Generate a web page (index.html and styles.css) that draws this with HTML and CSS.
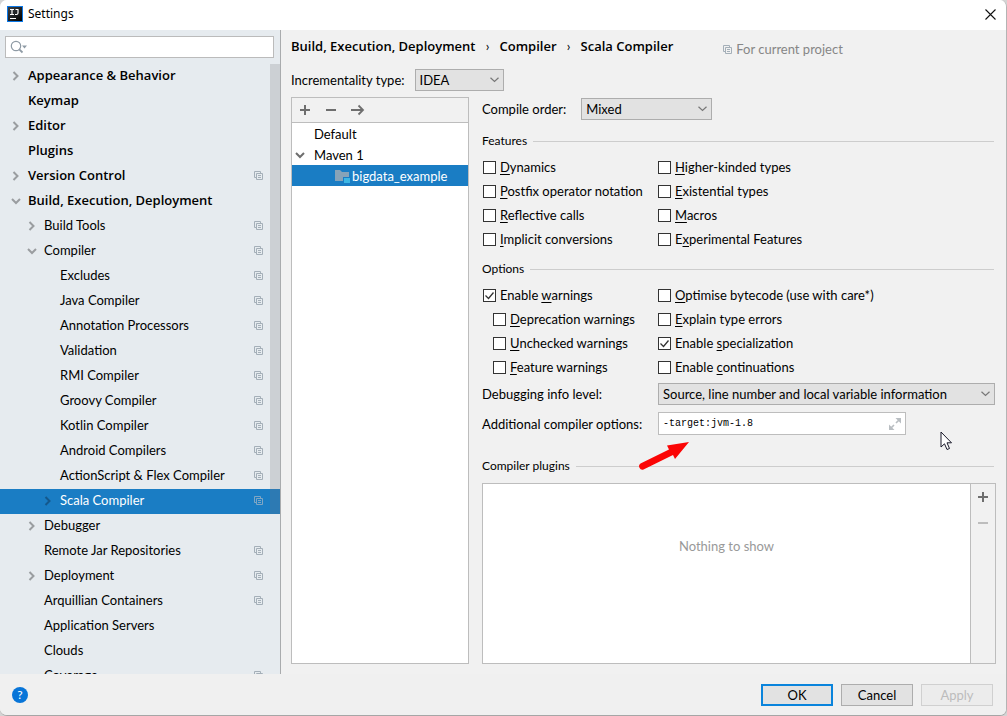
FILE: index.html
```html
<!DOCTYPE html>
<html lang="en">
<head>
<meta charset="utf-8">
<title>Settings</title>
<link rel="stylesheet" href="styles.css">
</head>
<body>
<svg class="defs" aria-hidden="true">
  <symbol id="right" viewBox="0 0 10 10"><path d="M2.5 1 L6.5 5 L2.5 9" fill="none" stroke="currentColor" stroke-width="2"/></symbol>
  <symbol id="down" viewBox="0 0 10 10"><path d="M1 3 L5 7 L9 3" fill="none" stroke="currentColor" stroke-width="2"/></symbol>
  <symbol id="copy" viewBox="0 0 9 9"><path d="M2.5 6.5 H.5 V.5 H6.5 V2.5 M2.5 2.5 H8.5 V8.5 H2.5 Z M4 4.5 H7 M4 6.5 H7" fill="none" stroke="currentColor"/></symbol>
  <symbol id="plus" viewBox="0 0 12 12"><path d="M1 6 H11 M6 1 V11" fill="none" stroke="currentColor" stroke-width="2"/></symbol>
  <symbol id="minus" viewBox="0 0 12 12"><path d="M1 6 H11" fill="none" stroke="currentColor" stroke-width="2"/></symbol>
</svg>
<div class="window">
  <header class="titlebar">
    <svg class="logo" viewBox="0 0 16 16"><defs><linearGradient id="lg" x1="0" y1="0" x2="1" y2="1"><stop offset="0" stop-color="#3c4248"/><stop offset="1" stop-color="#000"/></linearGradient></defs><rect width="16" height="16" fill="#0b78e8"/><rect x="1" y="1" width="14" height="14" fill="url(#lg)"/><path d="M3 3.5 H7 M5 3.5 V8.5 M3 8.5 H7 M8.5 3.5 H11.5 M11 3.5 V7 Q11 8.5 9.5 8.5 H8 M3 12.5 H9" fill="none" stroke="#fff" stroke-width="1.2"/></svg>
    <span class="title">Settings</span>
    <button class="close" aria-label="Close"><svg viewBox="0 0 11 11"><path d="M.5 .5 L10.5 10.5 M10.5 .5 L.5 10.5" stroke="#111" fill="none" stroke-width="1.1"/></svg></button>
  </header>
  <div class="main">
    <aside class="sidebar">
      <div class="search">
        <svg viewBox="0 0 18 14"><circle cx="6" cy="6" r="4.7" fill="none" stroke="#8f9ba5" stroke-width="1.2"/><path d="M9.3 9.3 L12.5 12.5" stroke="#8f9ba5" stroke-width="1.8"/><path d="M12 5.5 H17 L14.5 8.5 Z" fill="#8f9ba5"/></svg>
        <input type="text" aria-label="Search settings">
      </div>
      <nav class="treewrap">
        <ul class="tree">
          <li class="l1"><svg class="chev"><use href="#right"/></svg><span>Appearance &amp; Behavior</span></li>
          <li class="l1"><i class="chev"></i><span>Keymap</span></li>
          <li class="l1"><svg class="chev"><use href="#right"/></svg><span>Editor</span></li>
          <li class="l1"><i class="chev"></i><span>Plugins</span></li>
          <li class="l1"><svg class="chev"><use href="#right"/></svg><span>Version Control</span><svg class="copy"><use href="#copy"/></svg></li>
          <li class="l1"><svg class="chev"><use href="#down"/></svg><span>Build, Execution, Deployment</span></li>
          <li class="l2"><svg class="chev"><use href="#right"/></svg><span>Build Tools</span><svg class="copy"><use href="#copy"/></svg></li>
          <li class="l2"><svg class="chev"><use href="#down"/></svg><span>Compiler</span><svg class="copy"><use href="#copy"/></svg></li>
          <li class="l3"><i class="chev"></i><span>Excludes</span><svg class="copy"><use href="#copy"/></svg></li>
          <li class="l3"><i class="chev"></i><span>Java Compiler</span><svg class="copy"><use href="#copy"/></svg></li>
          <li class="l3"><i class="chev"></i><span>Annotation Processors</span><svg class="copy"><use href="#copy"/></svg></li>
          <li class="l3"><i class="chev"></i><span>Validation</span><svg class="copy"><use href="#copy"/></svg></li>
          <li class="l3"><i class="chev"></i><span>RMI Compiler</span><svg class="copy"><use href="#copy"/></svg></li>
          <li class="l3"><i class="chev"></i><span>Groovy Compiler</span><svg class="copy"><use href="#copy"/></svg></li>
          <li class="l3"><i class="chev"></i><span>Kotlin Compiler</span><svg class="copy"><use href="#copy"/></svg></li>
          <li class="l3"><i class="chev"></i><span>Android Compilers</span><svg class="copy"><use href="#copy"/></svg></li>
          <li class="l3"><i class="chev"></i><span>ActionScript &amp; Flex Compiler</span><svg class="copy"><use href="#copy"/></svg></li>
          <li class="l3 selected"><svg class="chev"><use href="#right"/></svg><span>Scala Compiler</span><svg class="copy"><use href="#copy"/></svg></li>
          <li class="l2"><svg class="chev"><use href="#right"/></svg><span>Debugger</span></li>
          <li class="l2"><i class="chev"></i><span>Remote Jar Repositories</span><svg class="copy"><use href="#copy"/></svg></li>
          <li class="l2"><svg class="chev"><use href="#right"/></svg><span>Deployment</span><svg class="copy"><use href="#copy"/></svg></li>
          <li class="l2"><i class="chev"></i><span>Arquillian Containers</span><svg class="copy"><use href="#copy"/></svg></li>
          <li class="l2"><i class="chev"></i><span>Application Servers</span></li>
          <li class="l2"><i class="chev"></i><span>Clouds</span></li>
          <li class="l2"><i class="chev"></i><span>Coverage</span><svg class="copy"><use href="#copy"/></svg></li>
        </ul>
        <div class="thumb"></div>
      </nav>
    </aside>
    <main class="content">
      <div class="crumbs">
        <b>Build, Execution, Deployment</b><span class="sep">›</span><b>Compiler</b><span class="sep">›</span><b>Scala Compiler</b>
        <span class="scope"><svg><use href="#copy"/></svg>For current project</span>
      </div>
      <div class="inc"><label for="inc">Incrementality type:</label><select id="inc" class="w-inc"><option>IDEA</option></select></div>
      <div class="panes">
        <section class="profiles">
          <div class="toolbar">
            <button aria-label="Add"><svg><use href="#plus"/></svg></button>
            <button aria-label="Remove"><svg><use href="#minus"/></svg></button>
            <button class="move" aria-label="Move"><svg viewBox="0 0 14 12"><path d="M0 6 H12 M7.5 1.5 L12 6 L7.5 10.5" fill="none" stroke="currentColor" stroke-width="1.8"/></svg></button>
          </div>
          <ul class="modules">
            <li><i class="chev"></i>Default</li>
            <li><svg class="chev"><use href="#down"/></svg>Maven 1</li>
            <li class="module selected"><svg class="folder" viewBox="0 0 15 14"><path d="M0 1 H5 L7 3 H14 V8 H8 V12 H0 Z" fill="#87a3b8"/><rect x="9" y="9" width="6" height="5" fill="#3db7e4"/></svg>bigdata_example</li>
          </ul>
        </section>
        <form class="settings">
          <div class="order"><label for="order">Compile order:</label><select id="order" class="w-order"><option>Mixed</option></select></div>
          <h2 class="features">Features</h2>
          <div class="checks">
            <label><input type="checkbox"><span><u>D</u>ynamics</span></label>
            <label><input type="checkbox"><span><u>H</u>igher-kinded types</span></label>
            <label><input type="checkbox"><span><u>P</u>ostfix operator notation</span></label>
            <label><input type="checkbox"><span><u>E</u>xistential types</span></label>
            <label><input type="checkbox"><span><u>R</u>eflective calls</span></label>
            <label><input type="checkbox"><span><u>M</u>acros</span></label>
            <label><input type="checkbox"><span><u>I</u>mplicit conversions</span></label>
            <label><input type="checkbox"><span>E<u>x</u>perimental Features</span></label>
          </div>
          <h2 class="options">Options</h2>
          <div class="checks">
            <label><input type="checkbox" checked><span>Enable <u>w</u>arnings</span></label>
            <label><input type="checkbox"><span><u>O</u>ptimise bytecode (use with care*)</span></label>
            <label class="sub"><input type="checkbox"><span><u>D</u>eprecation warnings</span></label>
            <label><input type="checkbox"><span><u>E</u>xplain type errors</span></label>
            <label class="sub"><input type="checkbox"><span><u>U</u>nchecked warnings</span></label>
            <label><input type="checkbox" checked><span>Enable <u>s</u>pecialization</span></label>
            <label class="sub"><input type="checkbox"><span><u>F</u>eature warnings</span></label>
            <label><input type="checkbox"><span>Enable <u>c</u>ontinuations</span></label>
          </div>
          <div class="fields">
            <label for="debug">Debugging info level:</label>
            <select id="debug"><option>Source, line number and local variable information</option></select>
            <label for="extra">Additional compiler options:</label>
            <div class="extra"><input id="extra" type="text" value="-target:jvm-1.8"><svg viewBox="0 0 12 12"><path d="M6.5 0 H12 V5.5 Z M0 6.5 V12 H5.5 Z" fill="#b9bec2"/><path d="M10 2 L7 5 M2 10 L5 7" stroke="#b9bec2" stroke-width="1.6"/></svg>
              <svg class="pointer-arrow" viewBox="0 0 54 30"><path d="M2.500 22.500 L31 8.500 L29 4.500 L51 1 L37 18 L35 14 L5.500 28.500 A3.400 3.400 0 0 1 2.500 22.500 Z" fill="#fb0505"/></svg>
              <svg class="cursor" viewBox="0 0 13 20"><path d="M1 1 V16 L4.500 12.800 L7 18.500 L9.500 17.500 L7 11.800 H11.500 Z" fill="#fff" stroke="#1a1a2a"/></svg>
            </div>
          </div>
          <h2 class="plugins">Compiler plugins</h2>
          <div class="plugin-list">
            <div class="empty">Nothing to show</div>
            <div class="side">
              <button type="button" aria-label="Add plugin"><svg><use href="#plus"/></svg></button>
              <button type="button" aria-label="Remove plugin" disabled><svg><use href="#minus"/></svg></button>
            </div>
          </div>
        </form>
      </div>
    </main>
  </div>
  <footer class="footer">
    <button class="help" aria-label="Help">?</button>
    <button class="btn primary">OK</button>
    <button class="btn">Cancel</button>
    <button class="btn" disabled>Apply</button>
  </footer>
</div>
</body>
</html>
```
FILE: styles.css
```css
* { box-sizing: border-box; }
body { margin: 0; background: #d4d4d4; color: #000; }
body, button, input, select { font: 13px/18px Lato, "Noto Sans", sans-serif; }
button { padding: 0; border: 0; background: none; color: #6e6e6e; }
ul { margin: 0; padding: 0; list-style: none; }
svg { display: block; flex: none; }
.defs { position: absolute; width: 0; height: 0; }

.window { display: flex; flex-direction: column; height: 100vh; overflow: hidden; background: #f1f1f1; border-right: 1px solid #b4b4b4; border-bottom: 1px solid #a6a6a6; border-radius: 7px; }
.titlebar { display: flex; align-items: center; height: 30px; flex: none; padding: 0 10px 2px 7px; background: #fff; }
.logo { width: 16px; height: 16px; }
.title { flex: 1; padding-left: 5px; font: 12px/18px "Noto Sans", sans-serif; }
.close svg { width: 11px; height: 11px; }
.main { display: flex; flex: 1; min-height: 0; }

.sidebar { display: flex; flex-direction: column; flex: none; width: 281px; padding-top: 6px; background: #e6ebef; border-right: 1px solid #a9abad; }
.search { display: flex; align-items: center; flex: none; height: 22px; margin: 0 6px 6px 5px; padding-left: 4px; background: #fff; border: 1px solid #bbb; }
.search svg { width: 18px; height: 14px; }
.search input { flex: 1; min-width: 0; border: 0; padding: 0 4px; outline: 0; }
.treewrap { position: relative; flex: 1; min-height: 0; overflow: hidden; }
.tree li { display: flex; align-items: center; height: 25px; padding-right: 17px; padding-bottom: 2px; white-space: nowrap; }
.tree span { flex: 1; padding-bottom: 1px; }
.chev { width: 10px; height: 10px; margin-right: 7px; flex: none; color: #9a9da0; }
.l1 { padding-left: 11px; }
.l1, .crumbs b { font-family: "Open Sans", "Noto Sans", sans-serif; font-weight: 600; }
.l2 { padding-left: 27px; }
.l3 { padding-left: 43px; }
.copy { width: 9px; height: 9px; color: #a4afb8; }
.selected { background: #1a7dc4; color: #fff; }
.tree .selected .chev { color: #14588c; }
.tree .selected .copy { color: #7fa6c4; }
.thumb { position: absolute; top: 0; right: 0; width: 10px; height: 450px; background: rgba(115, 115, 120, .22); }

.content { display: flex; flex-direction: column; flex: 1; min-width: 0; padding: 7px 10px 10px; }
.crumbs { display: flex; align-items: center; height: 18px; margin-bottom: 14px; white-space: nowrap; }
.sep { width: 24px; text-align: center; }
.scope { display: flex; align-items: center; gap: 4px; margin-left: 50px; padding-top: 6px; color: #868686; }
.scope svg { width: 9px; height: 9px; color: #a4afb8; }
.inc, .order { display: flex; align-items: center; gap: 10px; }
.order { gap: 15px; }
.inc { margin-bottom: 6px; }
select { appearance: none; height: 22px; padding: 0 20px 0 4px; border: 1px solid #adadad; border-radius: 0; color: #000; background: #e2e2e2 url("data:image/svg+xml,%3Csvg xmlns='http://www.w3.org/2000/svg' width='9' height='6'%3E%3Cpath d='M.5 .8 L4.5 4.5 L8.500 .8' fill='none' stroke='%23777' stroke-width='1.200'/%3E%3C/svg%3E") no-repeat right 4px center; }
.w-inc { width: 89px; }
.w-order { width: 131px; }
.panes { display: flex; flex: 1; gap: 13px; min-height: 0; }
.profiles { flex: none; width: 178px; background: #fff; border: 1px solid #bdbdbd; }
.toolbar { display: flex; align-items: center; gap: 14px; height: 25px; padding-left: 7px; background: #f1f1f1; border-bottom: 1px solid #bdbdbd; }
.toolbar svg, .side svg { width: 12px; height: 12px; }
.toolbar .move svg { width: 14px; }
.modules li { display: flex; align-items: center; height: 21px; padding-left: 3px; }
.modules .chev { margin-right: 9px; color: #6e6e6e; }
.modules .module { padding-left: 43px; }
.folder { width: 15px; height: 14px; margin-right: 2px; }

.settings { display: flex; flex-direction: column; flex: 1; min-width: 0; padding-top: 1px; }
h2 { display: flex; align-items: center; gap: 6px; margin: 0 2px 5px 0; font-size: 12px; line-height: 18px; font-weight: normal; }
h2::after { content: ""; flex: 1; height: 1px; background: #cdcdcd; }
.features { margin-top: 12px; }
.options { margin-top: 9px; }
.plugins { margin: 22px 2px 8px 0; }
.checks { display: grid; grid-template-columns: 175px 1fr; }
.checks label { display: flex; align-items: center; gap: 4px; height: 24px; padding-left: 1px; white-space: nowrap; }
.checks .sub { padding-left: 11px; }
input[type="checkbox"] { appearance: none; flex: none; width: 13px; height: 13px; margin: 0; background: #fff; border: 1px solid #333; }
input[type="checkbox"]:checked { background: #fff url("data:image/svg+xml,%3Csvg xmlns='http://www.w3.org/2000/svg' width='11' height='11'%3E%3Cpath d='M1.500 5.500 L4.500 8.500 L9.500 2.500' fill='none' stroke='%23333' stroke-width='1.300'/%3E%3C/svg%3E") no-repeat center; }
u { text-underline-offset: 2px; }
.fields { display: grid; grid-template-columns: 176px 1fr; margin: 4px 1px 0 0; row-gap: 7px; align-items: center; white-space: nowrap; }
.extra { position: relative; display: flex; align-items: center; width: 248px; height: 23px; padding: 0 4px; background: #fff; border: 1px solid #bdbdbd; }
.extra input { flex: 1; min-width: 0; padding: 0; border: 0; outline: 0; font: 10px/18px "Liberation Mono", monospace; }
.extra > svg { width: 12px; height: 12px; }
.extra .pointer-arrow { position: absolute; left: -21px; top: 28px; width: 54px; height: 30px; }
.extra .cursor { position: absolute; left: 281px; top: 18px; width: 13px; height: 20px; }
.plugin-list { display: flex; flex: 1; min-height: 0; border: 1px solid #bdbdbd; }
.empty { flex: 1; padding-top: 53px; background: #fff; color: #999; text-align: center; }
.side { display: flex; flex-direction: column; align-items: center; gap: 14px; width: 25px; padding-top: 7px; border-left: 1px solid #bdbdbd; }
.side button:disabled { color: #bdbdbd; }

.footer { display: flex; align-items: center; gap: 8px; flex: none; height: 41px; padding: 0 13px 0 12px; background: #f0f0f0; }
.help { width: 16px; height: 16px; margin-right: auto; border-radius: 50%; background: #0875d8; color: #fff; font-size: 12px; line-height: 16px; }
.btn { width: 72px; height: 22px; border: 1px solid #adadad; background: #e2e2e2; color: #000; }
.primary { border: 2px solid #0a84dc; }
.btn:disabled { border-color: #d0d0d0; background: #ececec; color: #bcbcbc; }
```
